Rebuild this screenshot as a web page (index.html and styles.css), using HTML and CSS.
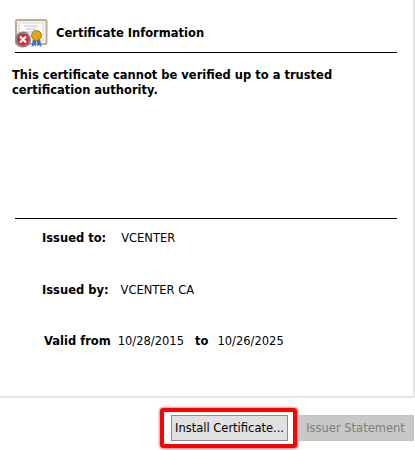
FILE: index.html
```html
<!DOCTYPE html>
<html lang="en">
<head>
<meta charset="utf-8">
<title>Certificate Information</title>
<link rel="stylesheet" href="styles.css">
</head>
<body>
<main class="panel">
  <header class="head">
    <svg class="cert" width="33" height="29" viewBox="0 0 33 29">
      <rect x="1" y="1" width="30.500" height="24" rx="1" fill="#f4f2ea" stroke="#bdae92" stroke-width="2"/>
      <rect x="4" y="4" width="24" height="18" fill="#fafbfc" stroke="#d5dbe6"/>
      <path d="M9 7h14M11 10h10M7 13h18" stroke="#bcc3d0"/>
      <path d="M18 20l-1.500 8 3-2 1 2 1-8zM25 20l1.500 8-3-2-1 2-1-8z" fill="#2f6fe0"/>
      <circle cx="21.500" cy="16.500" r="5" fill="#dba81e" stroke="#a97d10"/>
      <circle cx="8" cy="20.500" r="8" fill="#85858c"/>
      <circle cx="8" cy="20.500" r="6" fill="#d62a36"/>
      <path d="M5 17.500l6 6M11 17.500l-6 6" stroke="#fff" stroke-width="2.200"/>
    </svg>
    <h1 class="title">Certificate Information</h1>
  </header>
  <hr class="rule">
  <p class="warning">This certificate cannot be verified up to a trusted certification authority.</p>
  <hr class="rule rule-lower">
  <div class="details">
    <p class="row row-to"><b>Issued to:</b><span>VCENTER</span></p>
    <p class="row row-by"><b>Issued by:</b><span>VCENTER CA</span></p>
    <p class="row row-valid"><b class="valid-label">Valid from</b><span>10/28/2015</span><b class="valid-to">to</b><span>10/26/2025</span></p>
  </div>
</main>
<footer class="actions">
  <div class="highlight"><button class="btn" type="button">Install Certificate...</button></div>
  <button class="btn btn-disabled" type="button" disabled>Issuer Statement</button>
</footer>
</body>
</html>
```
FILE: styles.css
```css
* { box-sizing: border-box; }
html, body { margin: 0; height: 100%; }
body {
  width: 415px;
  height: 450px;
  overflow: hidden;
  background: #fff;
  color: #000;
  font: 11.5px/15px "DejaVu Sans", sans-serif;
  display: flex;
  flex-direction: column;
}
.panel {
  flex: none;
  height: 398px;
  padding: 14px 0 0 12px;
  border-right: 2px solid #e4e4e4;
  border-bottom: 2px solid #e4e4e4;
}
.head { display: flex; align-items: center; gap: 8px; height: 36px; padding: 2px 0 0 3px; }
.title { margin: 0; font-size: 11.5px; font-weight: 700; }
.rule { margin: 2px 16px 0 3px; border: 0; border-top: 1px solid #000; }
.warning { margin: 15px 16px 0 0; font-weight: 700; }
.rule-lower { margin-top: 120px; }
.details { padding-top: 12px; }
.row { margin: 0; display: flex; align-items: baseline; height: 52px; }
.row-to { padding-left: 30px; gap: 15px; }
.row-by { padding-left: 30px; gap: 12px; height: 51px; }
.row-valid { padding-left: 32px; gap: 9px; }
.valid-label { margin-right: -2px; }
.valid-to { margin: 0 0 0 2px; }
.actions { flex: none; display: flex; justify-content: flex-end; align-items: center; padding: 10px 1px 0 0; }
.highlight { padding: 3px 5px 3px 7px; border: 4px solid #f00; border-radius: 3px; box-shadow: 0 0 3px #f00; }
.btn { height: 26px; width: 117px; padding: 0; border: 1px solid #8c8c8c; background: #e1e1e1; color: #000; font: 11.5px "DejaVu Sans", sans-serif; white-space: nowrap; }
.btn-disabled { border-color: #c4c4c4; background: #c8c8c8; color: #808080; }
```
